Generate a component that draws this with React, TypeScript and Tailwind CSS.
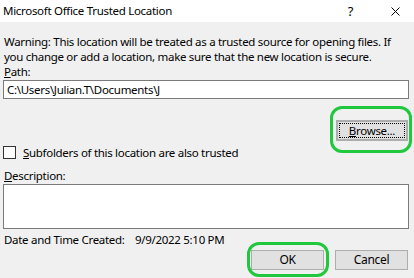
import { useState } from 'react'

function WinButton({ children, className = '' }: { children: React.ReactNode; className?: string }) {
  return (
    <button
      className={`h-[20px] bg-[#e1e1e1] border border-[#adadad] text-[12px] leading-none text-black flex items-center justify-center whitespace-nowrap p-0 ${className}`}
    >
      {children}
    </button>
  )
}

export default function App() {
  const [path, setPath] = useState('C:\\Users\\Julian.T\\Documents\\J')
  const [subfolders, setSubfolders] = useState(false)

  return (
    <div className="relative w-[414px] h-[278px] overflow-hidden bg-[#f0f0f0] text-black font-['Noto_Sans',sans-serif] tracking-[-0.3px]">
      {/* title bar */}
      <div className="h-[22px] bg-white flex items-center pl-[3px]">
        <span className="text-[11.5px] leading-none">Microsoft Office Trusted Location</span>
        <span className="ml-auto text-[13px] leading-none mr-[38px]">?</span>
        <svg width="9" height="9" viewBox="0 0 9 9" className="mr-[14px]">
          <path d="M0.5 0.5 L8.5 8.5 M8.5 0.5 L0.5 8.5" stroke="#000" strokeWidth="1" />
        </svg>
      </div>

      <div className="pl-[3px] pr-[5px] text-[11.5px] leading-[15px]">
        <p className="pt-[12px] pl-[1px] whitespace-nowrap">
          Warning: This location will be treated as a trusted source for opening files. If
          <br />
          you change or add a location, make sure that the new location is secure.
        </p>
        <div className="pl-[1px]">
          <span className="underline">P</span>ath:
        </div>
        <input
          value={path}
          onChange={(e) => setPath(e.target.value)}
          className="mt-[1px] w-full h-[19px] bg-white border border-[#7a7a7a] px-[3px] text-[11.5px] outline-none"
        />

        <div className="flex justify-end mt-[21px] pr-[1px]">
          <WinButton className="w-[72px] h-[21px] border-2 border-[#0078d7]">
            <span className="border border-dotted border-black w-[66px] h-[15px] flex items-center justify-center text-[11.5px]">
              <span className="underline">B</span>rowse...
            </span>
          </WinButton>
        </div>

        <label className="flex items-center mt-[4px]">
          <input
            type="checkbox"
            checked={subfolders}
            onChange={() => setSubfolders(!subfolders)}
            className="appearance-none w-[13px] h-[13px] bg-white border border-[#333] m-0"
          />
          <span className="ml-[7px]">
            <span className="underline">S</span>ubfolders of this location are also trusted
          </span>
        </label>

        <div className="mt-[8px] pl-[1px]">
          <span className="underline">D</span>escription:
        </div>
        <textarea className="block mt-[1px] w-full h-[45px] bg-white border border-[#7a7a7a] resize-none outline-none" />

        <div className="flex mt-[3px] pl-[1px] whitespace-nowrap">
          <span className="w-[131px]">Date and Time Created:</span>
          <span>9/9/2022 5:10 PM</span>
        </div>

        <div className="flex justify-end gap-[11px] mt-[3px] pr-[1px]">
          <WinButton className="w-[73px] text-[11.5px]">OK</WinButton>
          <WinButton className="w-[73px] text-[11.5px]">Cancel</WinButton>
        </div>
      </div>

      {/* annotation rings */}
      <div className="absolute left-[330px] top-[106px] w-[82px] h-[47px] border-[3px] border-[#1fc83c] rounded-[12px] pointer-events-none" />
      <div className="absolute left-[247px] top-[242px] w-[82px] h-[35px] border-[3px] border-[#1fc83c] rounded-[12px] pointer-events-none" />
    </div>
  )
}
